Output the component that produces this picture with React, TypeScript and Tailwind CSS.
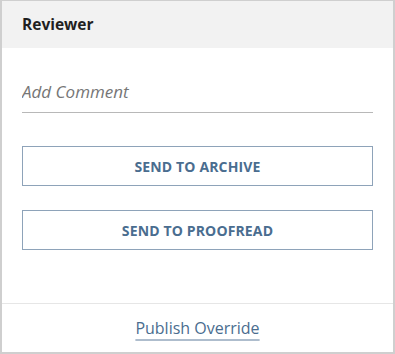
import React from 'react';

const font = { fontFamily: '"Open Sans", "Noto Sans", sans-serif' };

export default function App() {
  return (
    <div className="h-[354px] w-[395px] bg-white" style={font}>
      <div className="flex h-[354px] w-[395px] flex-col border-x-2 border-b-2 border-t border-[#cfcfcf] bg-white">
        {/* Header */}
        <div className="flex h-[47px] items-center bg-[#f2f2f2] px-5">
          <h2 className="text-[15.5px] font-bold text-[#1f1f1f]">Reviewer</h2>
        </div>

        {/* Body */}
        <div className="flex flex-1 flex-col px-5 pt-[29px]">
          <input
            type="text"
            placeholder="Add Comment"
            className="h-[36px] w-full border-b border-[#b8b8b8] bg-transparent pb-[6px] text-[17px] italic text-[#333] outline-none placeholder:text-[#767676]"
          />
          <div className="mt-[33px] flex flex-col gap-6">
            <button className="h-10 w-full border border-[#8ea3b9] text-[14px] font-bold tracking-[0.01em] text-[#4a6d8f]">
              SEND TO ARCHIVE
            </button>
            <button className="h-10 w-full border border-[#8ea3b9] text-[14px] font-bold tracking-[0.01em] text-[#4a6d8f]">
              SEND TO PROOFREAD
            </button>
          </div>
        </div>

        {/* Footer */}
        <div className="flex h-[49px] items-center justify-center border-t border-[#e6e6e6]">
          <a
            href="#"
            className="text-[16px] text-[#4a6d8f] underline decoration-[#aebdcd] decoration-2 underline-offset-[5px]"
          >
            Publish Override
          </a>
        </div>
      </div>
    </div>
  );
}
